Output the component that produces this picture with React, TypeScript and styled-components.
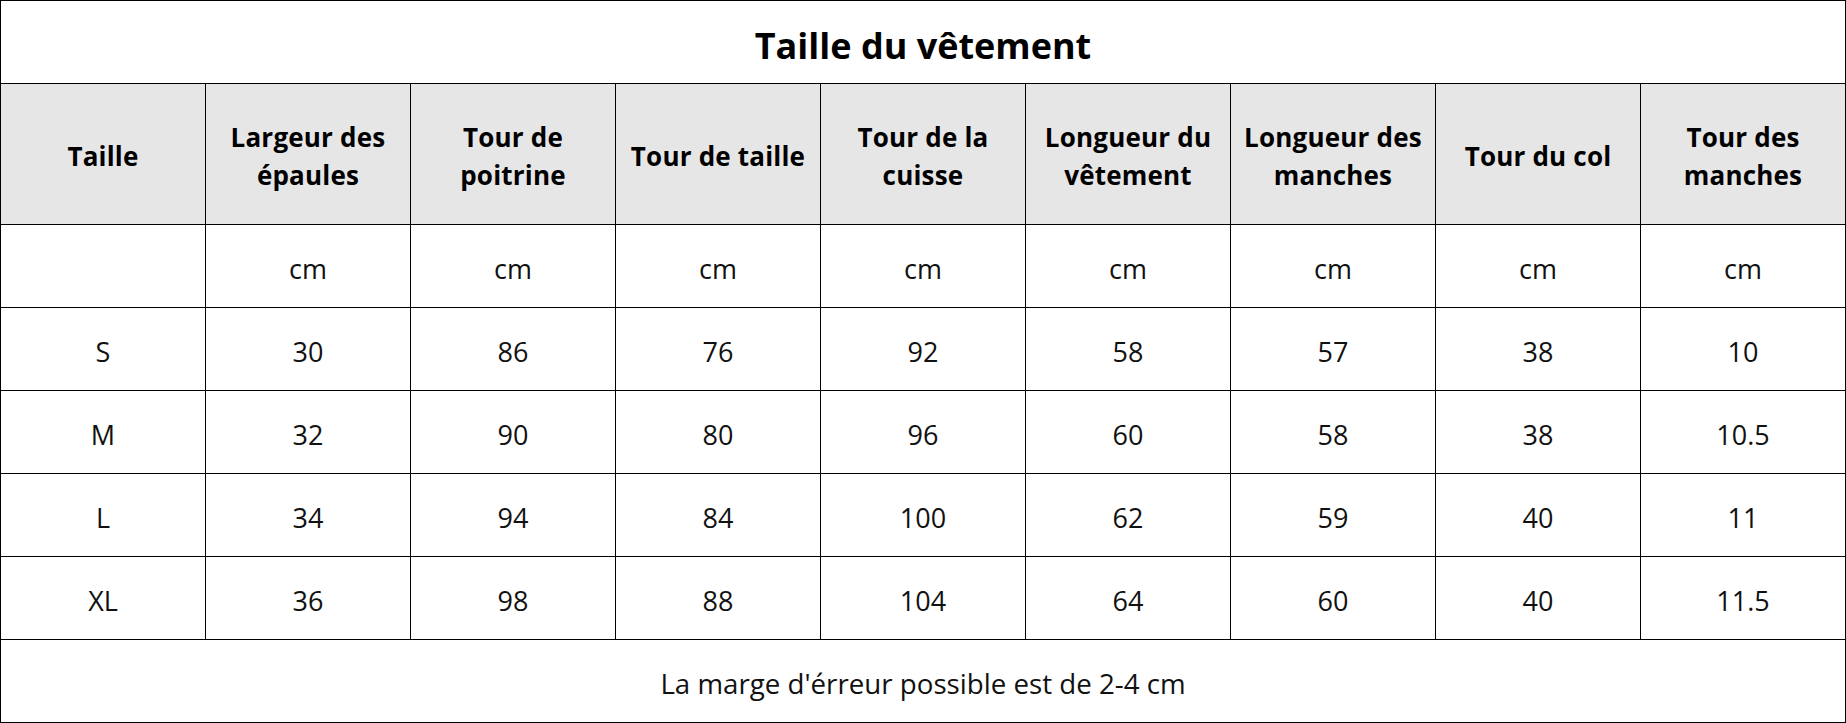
import styled, { createGlobalStyle } from "styled-components";

const GlobalStyle = createGlobalStyle`
  html, body {
    margin: 0;
    padding: 0;
    background: #ffffff;
  }
  * {
    box-sizing: border-box;
  }
`;

const Sheet = styled.div`
  width: 1846px;
  display: grid;
  grid-template-columns: repeat(9, 1fr);
  grid-template-rows: 83px 141px repeat(5, 83px) 83px;
  border-left: 1px solid #000;
  border-top: 1px solid #000;
  font-family: "Open Sans", "Noto Sans CJK SC", sans-serif;
  color: #111;
`;

const Cell = styled.div`
  display: flex;
  align-items: center;
  justify-content: center;
  text-align: center;
  border-right: 1px solid #000;
  border-bottom: 1px solid #000;
  padding-top: 4px;
  font-size: 27px;
`;

const Title = styled(Cell)`
  grid-column: 1 / -1;
  padding-top: 6px;
  font-size: 36px;
  font-weight: 700;
  color: #000;
`;

const HeadCell = styled(Cell)`
  background: #e6e6e6;
  font-weight: 700;
  font-size: 26px;
  line-height: 38px;
  color: #000;
  padding: 4px 2px 0;
  letter-spacing: 0.2px;
`;

const Note = styled(Cell)`
  grid-column: 1 / -1;
  font-size: 27.7px;
`;

const headers = [
  ["Taille"],
  ["Largeur des", "épaules"],
  ["Tour de", "poitrine"],
  ["Tour de taille"],
  ["Tour de la", "cuisse"],
  ["Longueur du", "vêtement"],
  ["Longueur des", "manches"],
  ["Tour du col"],
  ["Tour des", "manches"],
];

const rows = [
  ["", "cm", "cm", "cm", "cm", "cm", "cm", "cm", "cm"],
  ["S", "30", "86", "76", "92", "58", "57", "38", "10"],
  ["M", "32", "90", "80", "96", "60", "58", "38", "10.5"],
  ["L", "34", "94", "84", "100", "62", "59", "40", "11"],
  ["XL", "36", "98", "88", "104", "64", "60", "40", "11.5"],
];

const App = () => {
  return (
    <>
      <GlobalStyle />
      <Sheet>
        <Title>Taille du vêtement</Title>
        {headers.map((lines) => (
          <HeadCell key={lines.join(" ")}>
            <div>
              {lines.map((line) => (
                <div key={line}>{line}</div>
              ))}
            </div>
          </HeadCell>
        ))}
        {rows.map((row, r) =>
          row.map((value, c) => <Cell key={`${r}-${c}`}>{value}</Cell>)
        )}
        <Note>La marge d'érreur possible est de 2-4 cm</Note>
      </Sheet>
    </>
  );
};

export default App;
